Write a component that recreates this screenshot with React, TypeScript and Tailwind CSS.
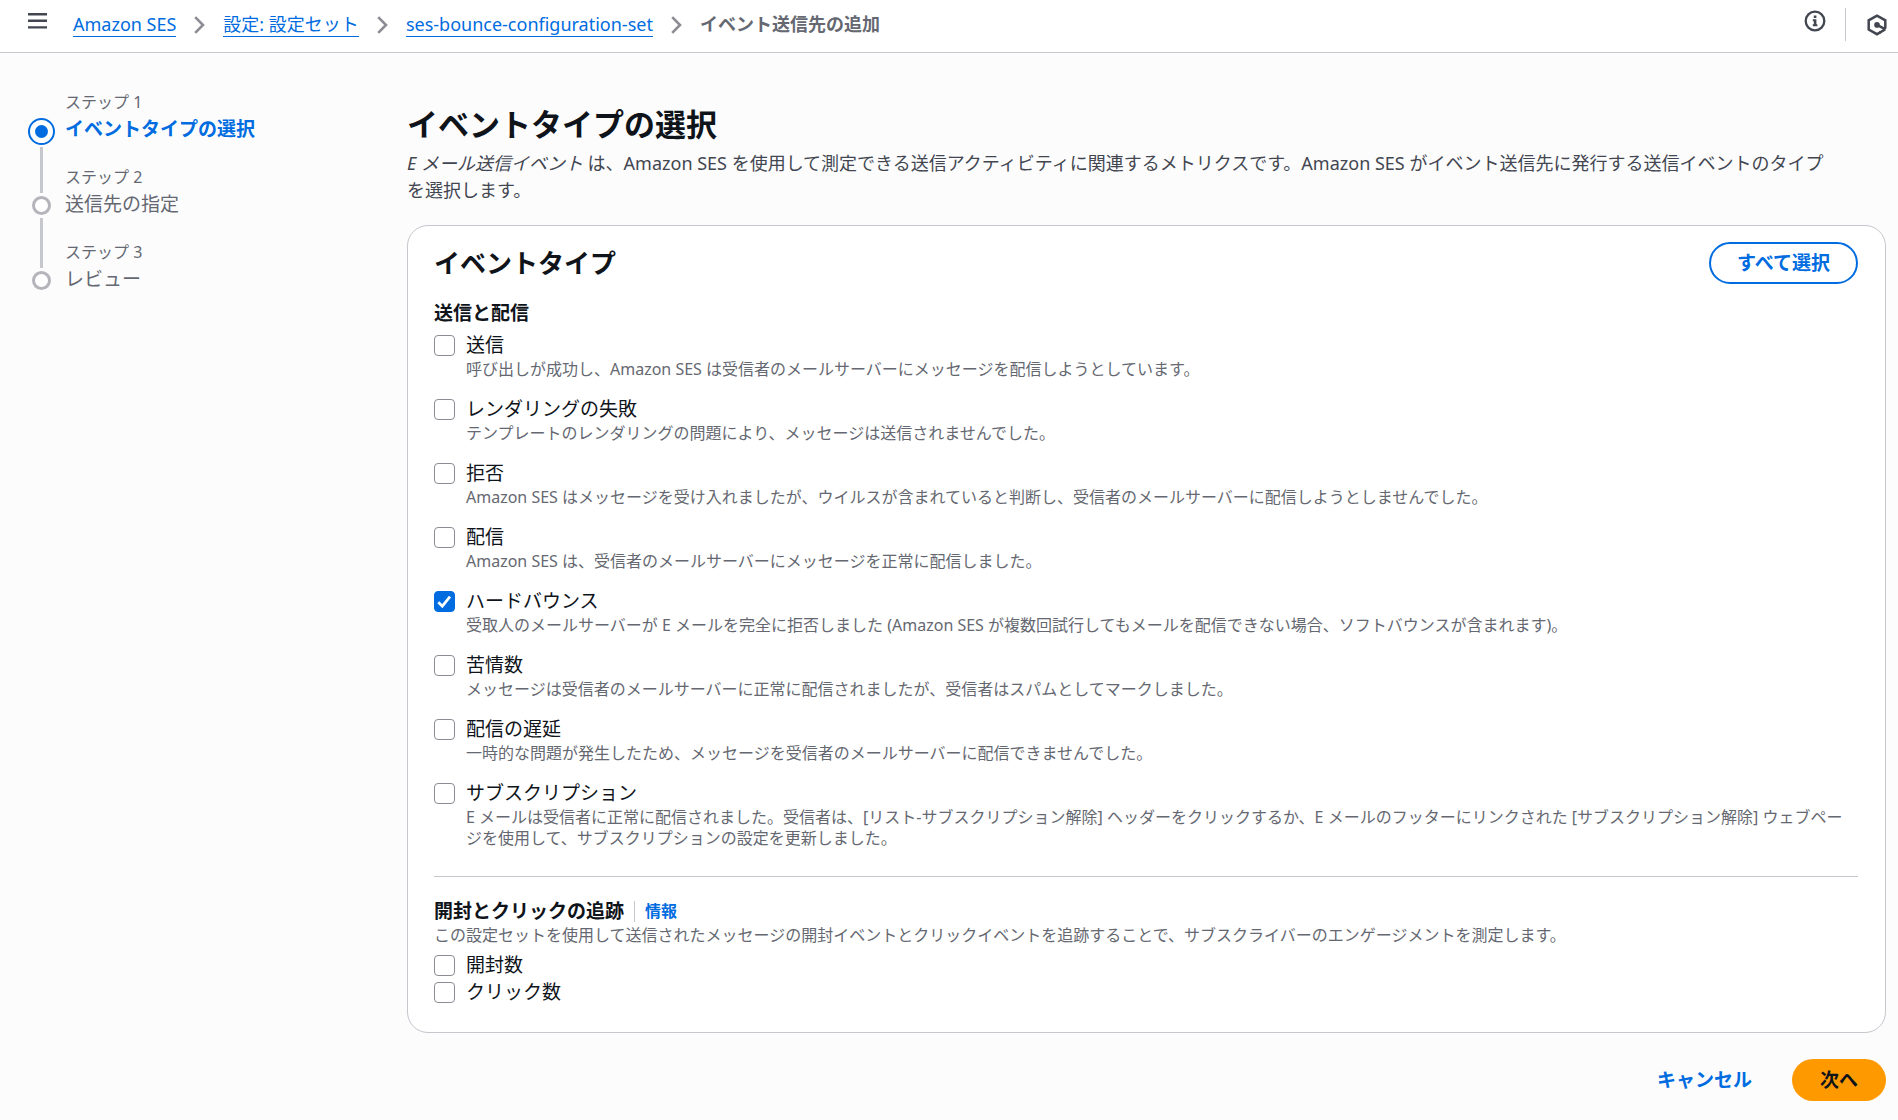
import React, { useState } from "react";

interface EventType {
  id: string;
  label: string;
  description?: string;
}

const steps = [
  { label: "ステップ 1", title: "イベントタイプの選択" },
  { label: "ステップ 2", title: "送信先の指定" },
  { label: "ステップ 3", title: "レビュー" },
];

const breadcrumbs = ["Amazon SES", "設定: 設定セット", "ses-bounce-configuration-set"];

const sendingEvents: EventType[] = [
  {
    id: "send",
    label: "送信",
    description: "呼び出しが成功し、Amazon SES は受信者のメールサーバーにメッセージを配信しようとしています。",
  },
  {
    id: "renderingFailure",
    label: "レンダリングの失敗",
    description: "テンプレートのレンダリングの問題により、メッセージは送信されませんでした。",
  },
  {
    id: "reject",
    label: "拒否",
    description:
      "Amazon SES はメッセージを受け入れましたが、ウイルスが含まれていると判断し、受信者のメールサーバーに配信しようとしませんでした。",
  },
  {
    id: "delivery",
    label: "配信",
    description: "Amazon SES は、受信者のメールサーバーにメッセージを正常に配信しました。",
  },
  {
    id: "bounce",
    label: "ハードバウンス",
    description:
      "受取人のメールサーバーが E メールを完全に拒否しました (Amazon SES が複数回試行してもメールを配信できない場合、ソフトバウンスが含まれます)。",
  },
  {
    id: "complaint",
    label: "苦情数",
    description: "メッセージは受信者のメールサーバーに正常に配信されましたが、受信者はスパムとしてマークしました。",
  },
  {
    id: "deliveryDelay",
    label: "配信の遅延",
    description: "一時的な問題が発生したため、メッセージを受信者のメールサーバーに配信できませんでした。",
  },
  {
    id: "subscription",
    label: "サブスクリプション",
    description:
      "E メールは受信者に正常に配信されました。受信者は、[リスト-サブスクリプション解除] ヘッダーをクリックするか、E メールのフッターにリンクされた [サブスクリプション解除] ウェブページを使用して、サブスクリプションの設定を更新しました。",
  },
];

const trackingEvents: EventType[] = [
  { id: "open", label: "開封数" },
  { id: "click", label: "クリック数" },
];

const Header = () => {
  return (
    <header className="flex h-[53px] items-center border-b border-[#c6c6cd] bg-white pb-[3px] pl-7 pr-[11px]">
      <button type="button" aria-label="メニュー" className="mb-2 text-[#424650]">
        <svg width="19" height="18" viewBox="0 0 19 18" fill="currentColor">
          <path d="M0 1h19v2.4H0zM0 7.6h19V10H0zM0 14.2h19v2.4H0z" />
        </svg>
      </button>

      <nav aria-label="breadcrumb" className="ml-[26px] flex-1">
        <ol className="flex items-center gap-[18px] text-lg leading-6">
          {breadcrumbs.map((item) => (
            <li key={item} className="flex items-center gap-[18px]">
              <a href="#" className="border-b border-[#006ce0] text-[#006ce0]">
                {item}
              </a>
              <svg width="11" height="18" viewBox="0 0 11 18" fill="none" stroke="#8c8c94" strokeWidth="2.6">
                <path d="M1.2 1.2 9 9l-7.8 7.8" />
              </svg>
            </li>
          ))}
          <li className="pb-px font-bold text-[#656871]">イベント送信先の追加</li>
        </ol>
      </nav>

      <button type="button" aria-label="情報" className="mb-2 text-[#424650]">
        <svg width="22" height="22" viewBox="0 0 22 22" fill="none">
          <circle cx="11" cy="11" r="9.3" stroke="currentColor" strokeWidth="2.3" />
          <path fill="currentColor" d="M9.8 5.6h2.6v2.4H9.8zM8.8 9.2h3.6v5h1v2H8.8v-2h1v-3h-1z" />
        </svg>
      </button>
      <div className="ml-[19px] h-[33px] w-px bg-[#c6c6cd]" />
      <button type="button" aria-label="Amazon Q" className="ml-[21px] text-[#424650]">
        <svg width="20" height="22" viewBox="0 0 20 22" fill="none" stroke="currentColor" strokeWidth="2.5">
          <path d="M13.6 18.2 10 20.2 1.7 15.6V6.3L10 1.7l8.3 4.6v8.3" />
          <path d="m10 10.9 8.6 4.5" />
          <path d="m12.6 18.7 5.5-3.3" />
          <circle cx="10" cy="10.9" r="2.8" fill="currentColor" stroke="none" />
        </svg>
      </button>
    </header>
  );
};

const Steps = () => {
  return (
    <ol className="w-[367px] shrink-0">
      {steps.map((step, index) => {
        const active = index === 0;
        const last = index === steps.length - 1;
        return (
          <li key={step.label} className="flex h-[75px] gap-2.5">
            <div className="flex w-[27px] flex-col items-center">
              <div className={active ? "h-6 w-[3px]" : "h-[26px] w-[3px] bg-[#c6c6cd]"} />
              {active ? (
                <div className="my-0.5 flex size-[27px] items-center justify-center rounded-full border-2 border-[#006ce0] bg-white">
                  <div className="size-[13px] rounded-full bg-[#006ce0]" />
                </div>
              ) : (
                <div className="my-[3px] size-[19px] rounded-full border-[3px] border-[#b4b4bb] bg-white" />
              )}
              {!last && <div className="w-[3px] flex-1 bg-[#c6c6cd]" />}
            </div>
            <div>
              <p className="text-base leading-[21px] text-[#656871]">{step.label}</p>
              <p
                className={
                  active
                    ? "pt-[3px] text-[19px] font-bold leading-[27px] text-[#006ce0]"
                    : "pt-[3px] text-[19px] leading-[27px] text-[#656871]"
                }
              >
                {step.title}
              </p>
            </div>
          </li>
        );
      })}
    </ol>
  );
};

interface CheckboxProps {
  item: EventType;
  checked: boolean;
  onChange: (id: string) => void;
}

const Checkbox = ({ item, checked, onChange }: CheckboxProps) => {
  return (
    <div className="flex gap-[11px]">
      <div className="grid h-[27px] shrink-0 place-items-center">
        <input
          type="checkbox"
          id={item.id}
          checked={checked}
          onChange={() => onChange(item.id)}
          className="col-start-1 row-start-1 size-[21px] appearance-none rounded border border-[#8c8c94] bg-white checked:border-[#006ce0] checked:bg-[#006ce0]"
        />
        {checked && (
          <svg
            className="pointer-events-none col-start-1 row-start-1"
            width="21"
            height="21"
            viewBox="0 0 21 21"
            fill="none"
            stroke="#fff"
            strokeWidth="2.7"
          >
            <path d="m4.3 11.2 4 4L16 5.7" />
          </svg>
        )}
      </div>
      <div>
        <label htmlFor={item.id} className="block text-[19px] leading-[27px] text-[#0f141a]">
          {item.label}
        </label>
        {item.description && (
          <p className="pr-3 text-base leading-[21px] text-[#656871]">{item.description}</p>
        )}
      </div>
    </div>
  );
};

const App = () => {
  const [selected, setSelected] = useState<string[]>(["bounce"]);

  const handleToggle = (id: string) => {
    setSelected((prev) => (prev.includes(id) ? prev.filter((x) => x !== id) : [...prev, id]));
  };

  const handleSelectAll = () => {
    setSelected([...sendingEvents, ...trackingEvents].map((e) => e.id));
  };

  return (
    <div
      lang="ja"
      className="min-h-screen bg-[#fcfcfd] font-['Noto_Sans','Noto_Sans_CJK_JP',sans-serif] text-[#0f141a]"
    >
      <Header />

      <div className="flex gap-3 pb-5 pl-7 pr-3 pt-[39px]">
        <Steps />

        <main className="min-w-0 flex-1 pt-3">
          <h1 className="text-[31px] font-bold leading-10">イベントタイプの選択</h1>
          <p className="mt-1.5 pr-12 text-lg leading-[27px] text-[#424650]">
            <em>E メール送信イベント</em> は、Amazon SES
            を使用して測定できる送信アクティビティに関連するメトリクスです。Amazon SES
            がイベント送信先に発行する送信イベントのタイプを選択します。
          </p>

          <section className="mt-[21px] rounded-[21px] border border-[#c6c6cd] bg-white pb-[26px] pl-[26px] pr-[27px] pt-4">
            {/* Card header */}
            <div className="flex items-center justify-between">
              <h2 className="text-[26px] font-bold leading-8">イベントタイプ</h2>
              <button
                type="button"
                onClick={handleSelectAll}
                className="h-[42px] rounded-full border-2 border-[#006ce0] bg-white px-[26px] text-[19px] font-bold text-[#006ce0]"
              >
                すべて選択
              </button>
            </div>

            {/* Sending and delivery */}
            <h3 className="mt-4 text-[19px] font-bold leading-[27px]">送信と配信</h3>
            <div className="mt-[5px] flex flex-col gap-4">
              {sendingEvents.map((item) => (
                <Checkbox
                  key={item.id}
                  item={item}
                  checked={selected.includes(item.id)}
                  onChange={handleToggle}
                />
              ))}
            </div>

            <hr className="mb-[21px] mt-[27px] border-[#c6c6cd]" />

            {/* Open and click tracking */}
            <div className="flex items-center">
              <h3 className="text-[19px] font-bold leading-[27px]">開封とクリックの追跡</h3>
              <a
                href="#"
                className="ml-2.5 border-l border-[#c6c6cd] pl-2.5 text-base font-bold leading-[21px] text-[#006ce0]"
              >
                情報
              </a>
            </div>
            <p className="text-base leading-[21px] text-[#656871]">
              この設定セットを使用して送信されたメッセージの開封イベントとクリックイベントを追跡することで、サブスクライバーのエンゲージメントを測定します。
            </p>
            <div className="mt-1.5 flex flex-col">
              {trackingEvents.map((item) => (
                <Checkbox
                  key={item.id}
                  item={item}
                  checked={selected.includes(item.id)}
                  onChange={handleToggle}
                />
              ))}
            </div>
          </section>

          {/* Buttons */}
          <div className="mt-[26px] flex justify-end gap-3">
            <button type="button" className="h-[42px] px-7 text-[19px] font-bold text-[#006ce0]">
              キャンセル
            </button>
            <button
              type="button"
              className="h-[42px] rounded-full bg-[#ff9900] px-7 text-[19px] font-bold text-[#0f141a]"
            >
              次へ
            </button>
          </div>
        </main>
      </div>
    </div>
  );
};

export default App;
